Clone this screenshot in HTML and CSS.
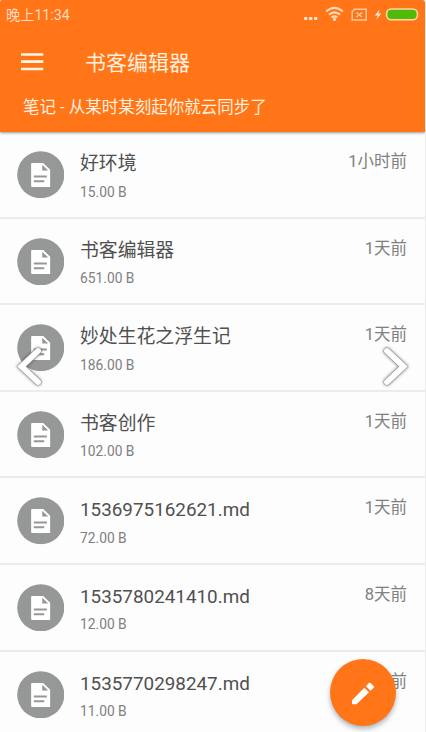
FILE: index.html
```html
<!DOCTYPE html>
<html lang="zh-CN">
<head>
<meta charset="utf-8">
<title>书客编辑器</title>
<link rel="stylesheet" href="styles.css">
</head>
<body>
<svg class="defs" aria-hidden="true">
  <symbol id="doc" viewBox="0 0 48 48">
    <circle cx="24" cy="24" r="23.8" fill="#969797"/>
    <path d="M15.3 12H26.5L33.5 19V36.3H15.3Q14.3 36.3 14.3 35.3V13Q14.3 12 15.3 12Z" fill="#fff"/>
    <path d="M25.5 13.8V19.8H31.5ZM17 24.7H30.2V26.8H17ZM17 29.5H27.5V31.6H17Z" fill="#969797"/>
  </symbol>
</svg>
<div class="screen">
  <header class="header">
    <div class="status">
      <span class="clock">晚上11:34</span>
      <svg class="indicators" width="116" height="18" viewBox="0 0 116 18">
        <g fill="#ffe4cf"><rect x="1" y="12" width="3.4" height="3" rx=".8"/><rect x="6" y="12" width="3.4" height="3" rx=".8"/><rect x="11" y="12" width="3.4" height="3" rx=".8"/></g>
        <g fill="none" stroke="#ffd9bb" stroke-width="2.1"><path d="M23.2 6.5Q31.5-.8 39.8 6.5M26 9.6Q31.5 5 37 9.6M28.6 12.5Q31.5 10.3 34.4 12.5"/></g>
        <circle cx="31.5" cy="14.4" r="1.6" fill="#ffd9bb"/>
        <path d="M51.4 4.3H63.2V15.1H49.2V6.7ZM53.5 7.5L59 12M59 7.5L53.5 12" fill="none" stroke="#ffc99d" stroke-width="1.5"/>
        <path d="M76.5 4.4L71.8 10.4H74.6L73.3 14.8L78.3 8.6H75.4Z" fill="#ffe4cf"/>
        <rect x="83.6" y="4" width="30.8" height="10.8" rx="4.6" fill="#4fba08" stroke="#ffd5a0" stroke-width="1.6"/>
      </svg>
    </div>
    <div class="toolbar">
      <svg class="menu" width="23" height="18" viewBox="0 0 23 18"><path d="M0 1.5H22.3M0 8.7H22.3M0 16H22.3" stroke="#fff5e9" stroke-width="2.7"/></svg>
      <h1 class="title">书客编辑器</h1>
    </div>
    <p class="subtitle">笔记 - 从某时某刻起你就云同步了</p>
  </header>
  <main class="list">
    <div class="row"><svg class="avatar"><use href="#doc"/></svg><div class="info"><div class="name">好环境</div><div class="size">15.00 B</div></div><div class="time">1小时前</div></div>
    <div class="row"><svg class="avatar"><use href="#doc"/></svg><div class="info"><div class="name">书客编辑器</div><div class="size">651.00 B</div></div><div class="time">1天前</div></div>
    <div class="row"><svg class="avatar"><use href="#doc"/></svg><div class="info"><div class="name">妙处生花之浮生记</div><div class="size">186.00 B</div></div><div class="time">1天前</div></div>
    <div class="row"><svg class="avatar"><use href="#doc"/></svg><div class="info"><div class="name">书客创作</div><div class="size">102.00 B</div></div><div class="time">1天前</div></div>
    <div class="row"><svg class="avatar"><use href="#doc"/></svg><div class="info"><div class="name">1536975162621.md</div><div class="size">72.00 B</div></div><div class="time">1天前</div></div>
    <div class="row"><svg class="avatar"><use href="#doc"/></svg><div class="info"><div class="name">1535780241410.md</div><div class="size">12.00 B</div></div><div class="time">8天前</div></div>
    <div class="row"><svg class="avatar"><use href="#doc"/></svg><div class="info"><div class="name">1535770298247.md</div><div class="size">11.00 B</div></div><div class="time">8天前</div></div>
  </main>
  <svg class="arrow prev" viewBox="0 0 32 46"><path class="edge" d="M25 7L8.5 22.5L25 38"/><path class="core" d="M25 7L8.5 22.5L25 38"/></svg>
  <svg class="arrow next" viewBox="0 0 32 46"><path class="edge" d="M7 7L23.5 22.5L7 38"/><path class="core" d="M7 7L23.5 22.5L7 38"/></svg>
  <div class="fab">
    <svg width="24" height="24" viewBox="0 0 24 24"><path d="M1 19.2V22.5Q1 23.2 1.7 23.2H5.5L18 11.3L13.3 6.8ZM14.9 5.3L19.5 9.8L22.6 6.9Q23.5 6 22.6 5.1L19.6 2.1Q18.7 1.2 17.8 2.1Z" fill="#fff"/></svg>
  </div>
</div>
</body>
</html>
```
FILE: styles.css
```css
* { box-sizing: border-box; }

body {
  margin: 0;
  background: #fff;
  font-family: Roboto, "Noto Sans CJK SC", sans-serif;
}

.defs {
  position: absolute;
  width: 0;
  height: 0;
}

.screen {
  position: relative;
  width: 426px;
  height: 732px;
  overflow: hidden;
  background: #fdfdfd;
  border-right: 1px solid #ececec;
}

.header {
  position: relative;
  height: 132px;
  background: #ff7518;
  border-radius: 2px 3px 0 0;
  box-shadow: 0 1px 3px rgba(0, 0, 0, .4);
  color: #fff0df;
}

.status {
  display: flex;
  justify-content: space-between;
  height: 30px;
  padding: 5px 6px 0 6px;
}

.clock {
  font-size: 14.2px;
  line-height: 20px;
  color: #ffdcc0;
}

.toolbar {
  display: flex;
  align-items: center;
  height: 64px;
  padding: 0 21px;
}

.menu { flex: none; }

.title {
  margin: 2px 0 0 41px;
  font-size: 21px;
  line-height: 30px;
  font-weight: 400;
}

.subtitle {
  margin: 2px 0 0 23px;
  font-size: 16.5px;
  line-height: 24px;
}

.row {
  display: flex;
  height: 86.6px;
  padding: 19px 18px 0 16.5px;
  border-bottom: 2px solid #ececec;
}

.avatar {
  flex: none;
  width: 47.5px;
  height: 47.5px;
}

.info {
  flex: 1;
  margin-left: 16px;
}

.name {
  margin-top: -1px;
  font-size: 18.85px;
  line-height: 28px;
  color: #505050;
}

.size {
  margin-top: 3.5px;
  font-size: 13.8px;
  line-height: 20px;
  color: #808080;
}

.time {
  margin-top: -1px;
  font-size: 16.5px;
  line-height: 24px;
  color: #808080;
}

.arrow {
  position: absolute;
  top: 344px;
  width: 32px;
  height: 46px;
  filter: drop-shadow(0 0 1.5px rgba(0, 0, 0, .5));
}

.arrow path {
  fill: none;
  stroke-linecap: round;
}

.edge {
  stroke: #999;
  stroke-width: 6.8;
}

.core {
  stroke: #fff;
  stroke-width: 5.8;
}

.prev { left: 13px; }

.next { left: 380px; }

.fab {
  position: absolute;
  left: 330px;
  top: 659px;
  display: flex;
  align-items: center;
  justify-content: center;
  width: 66px;
  height: 67px;
  border-radius: 50%;
  background: #ff7518;
  box-shadow: 0 3px 5px rgba(60, 80, 90, .4);
}
```
